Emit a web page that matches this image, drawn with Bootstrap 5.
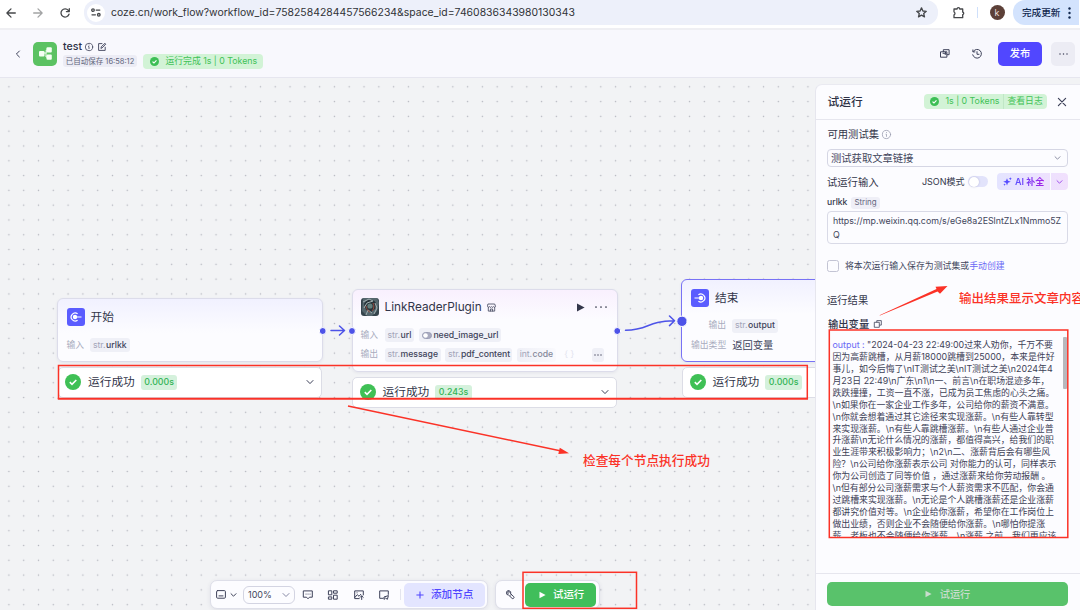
<!DOCTYPE html>
<html lang="zh-CN">
<head>
<meta charset="utf-8">
<meta name="viewport" content="width=device-width, initial-scale=1">
<title>test - Coze</title>
<link href="https://cdn.jsdelivr.net/npm/bootstrap@5.3.0/dist/css/bootstrap.min.css" rel="stylesheet">
<style>
  body { font-family: Inter, "Noto Sans CJK SC", sans-serif; font-size: 9px; line-height: 1; color: #42465c; height: 610px; width: 1080px; overflow: hidden; background: #f2f3f5; }
  svg { display: block; flex: none; overflow: visible; }
  .ico { fill: none; stroke: #3d4159; stroke-width: 1; stroke-linecap: round; stroke-linejoin: round; }
  .nowrap { white-space: nowrap; }

  /* browser bar */
  .browser { height: 30px; background: #fff; border-bottom: 2px solid #efeff3; padding-bottom: 3px; }
  .browser .ico { stroke: #45474a; stroke-width: 1.3; }
  .omnibox { width: 854px; height: 25px; margin-left: 14px; background: #edf0fa; border-radius: 12px; padding: 0 11px 0 3px; }
  .site-dot { width: 18px; height: 18px; border-radius: 50%; background: #fff; }
  .url { font-size: 10.4px; letter-spacing: .02px; color: #303236; margin-left: 6px; padding-top: 2px; }
  .avatar { width: 15px; height: 15px; border-radius: 50%; background: #5c4038; color: #eadfdb; font-size: 9px; }
  .update { width: 66px; height: 25px; background: #d3e3fd; border-radius: 12px 0 0 12px; color: #12294f; font-size: 9.6px; font-weight: 500; padding-left: 9px; }

  /* app header */
  .apphead { height: 48px; background: #f8f8fd; border-bottom: 1px solid #e6e6ef; padding-left: 14px; padding-right: 5px; }
  .flow-logo { width: 24px; height: 24px; border-radius: 5px; background: #5bc262; margin-left: 11px; }
  .saved { height: 12px; width: 74px; border-radius: 3px; background: #ececf5; font-size: 7.5px; color: #61657c; }
  .done { height: 15px; border-radius: 4px; background: #d2f3d6; color: #41c257; font-size: 8.8px; }
  .btn-pub { width: 44px; height: 24px; padding: 0; border-radius: 5px; background: #5147ff; color: #fff; font-size: 10.2px; font-weight: 500; line-height: 1; border: 0; }
  .btn-more { width: 24px; height: 24px; border-radius: 5px; background: #ececf4; }

  /* canvas */
  .stage { background-color: #f2f3f5; background-image: radial-gradient(circle, #b4b6be .7px, transparent 1.05px); background-size: 14.8px 14.8px; background-position: 1.5px 1.4px; }
  .node { position: absolute; width: 266px; border: 1px solid #dcdcea; border-radius: 6px; background: linear-gradient(#f1f1ff, #fcfcff 34px); box-shadow: 0 1px 3px rgba(60,60,110,.08); }
  .node.pink { background: linear-gradient(#f9f0fe, #fcfcff 30px); }
  .node.picked { border-color: #7872f5; }
  .node-ico { width: 18px; height: 18px; border-radius: 3px; background: #5a5cff; }
  .node-title { font-size: 11.7px; color: #33364a; padding-top: 2px; }
  .io { font-size: 8.8px; color: #a9acbe; height: 14px; }
  .chip { height: 14px; border-radius: 3px; background: #eff0f7; padding: 0 3px; color: #a2a5b9; font-size: 8.7px; letter-spacing: -.1px; }
  .chip b { font-weight: 500; color: #40435a; letter-spacing: -.03px; }
  .status { position: absolute; width: 264.5px; height: 30.5px; border: 1px solid #dcdde6; border-radius: 5px; background: #fff; padding: 0 7px 0 6.5px; }
  .status .lbl { font-size: 11.7px; color: #33364a; margin-left: 7px; padding-top: 2px; }
  .took { height: 15px; border-radius: 3px; background: #d5f1dc; color: #32b455; font-size: 8.8px; font-weight: 500; padding: 0 3.5px; margin-left: 6px; }
  .toolbox { position: absolute; height: 29px; background: #fcfcff; border: 1px solid #dedfe9; border-radius: 7px; box-shadow: 0 1px 4px rgba(60,60,110,.1); }
  .zoombox { width: 52px; height: 18px; border: 1px solid #d3d4e2; border-radius: 6px; font-size: 9px; padding: 0 4px; }
  .btn-add { width: 81px; height: 24px; border-radius: 5px; background: #e3e5ff; color: #5147ff; font-size: 10.6px; font-weight: 500; }
  .btn-go { width: 71px; height: 24px; border-radius: 5px; background: #40be5b; color: #fff; font-size: 10.4px; font-weight: 500; }
  .btn-add span, .btn-go span { padding-top: 1.5px; }

  /* side panel */
  .side { width: 265px; margin-top: 6px; background: #fcfcff; border-top-left-radius: 7px; border-left: 1px solid #e6e6ee; border-top: 1px solid #eaeaf1; }
  .side-head { height: 35px; border-bottom: 1px solid #e6e6ee; padding: 0 14px 1px 11.5px; }
  .side-body { padding: 0 12px 0 11px; }
  .sec { font-size: 10.3px; color: #33364a; }
  .pick { height: 18px; margin-top: 8px; border: 1px solid #d5d6e4; border-radius: 4px; padding: 0 6px 0 3px; font-size: 10.3px; }
  .knob-track { width: 20px; height: 11px; border-radius: 6px; background: #e2e3fb; padding: 0 .5px; }
  .knob { width: 10px; height: 10px; border-radius: 50%; background: #fff; box-shadow: 0 0 2px rgba(60,60,120,.3); }
  .ai { height: 17px; width: 71px; border-radius: 4px; background: linear-gradient(90deg, #e4e4ff, #f1e0fd); font-size: 9px; }
  .ai-txt { background: linear-gradient(90deg, #5b50ff, #a31fe6); -webkit-background-clip: text; color: transparent; font-weight: 600; }
  .ai-more { width: 18px; height: 17px; border-left: 1px solid #fcfcff; }
  .typ { height: 12px; border-radius: 3px; background: #efeff7; padding: 0 3px; font-size: 7.9px; color: #63667d; }
  .entry { height: 33px; border: 1px solid #d9dae7; border-radius: 4px; padding: 1.5px 5px; font-size: 8.84px; line-height: 14.6px; }
  .tick { width: 12px; height: 12px; border: 1px solid #c3c4d4; border-radius: 2.5px; }
  .outbox { height: 207px; margin-right: 0; padding: 8.5px 0 0 5.5px; line-height: 11.93px; font-size: 8.9px; overflow: hidden; color: #3e4257; position: relative; }
  .outbox div { white-space: pre; height: 11.93px; }
  .thumb { position: absolute; right: 1px; top: 6px; width: 4px; height: 52px; background: #b8b8bd; border-radius: 1px; }
  .side-foot { height: 37px; border-top: 1px solid #e6e6ee; padding: 8px 12px 0 11px; }
  .btn-run { height: 24px; border-radius: 5px; background: #59c26b; color: #c8ddcd; font-size: 10.2px; font-weight: 500; }

  /* annotations */
  .marks { position: absolute; left: 0; top: 0; pointer-events: none; }
  .note-a, .note-b { position: absolute; color: #fb3227; font-weight: 500; white-space: nowrap; }
  .note-a { left: 583px; top: 455px; font-size: 12.7px; }
  .note-b { left: 959px; top: 292.5px; font-size: 12.5px; }
</style>
<script src="https://cdn.jsdelivr.net/npm/bootstrap@5.3.0/dist/js/bootstrap.bundle.min.js"></script>
</head>
<body class="position-relative d-flex flex-column">

<div class="browser d-flex align-items-center nowrap">
  <svg class="ico" width="10" height="10" viewBox="0 0 10 10" style="margin-left:6px"><path d="M9.3 5H1M5 .9 .9 5 5 9.1"/></svg>
  <svg class="ico opacity-50" width="10" height="10" viewBox="0 0 10 10" style="margin-left:17px"><path d="M.7 5H9M5 .9 9.1 5 5 9.1"/></svg>
  <svg class="ico" width="10" height="10" viewBox="0 0 10 10" style="margin-left:17px"><path d="M9 6.2A4.1 4.1 0 1 1 8.3 2.4L9.2 3.5M9.3.7v2.9H6.4"/></svg>
  <div class="omnibox d-flex align-items-center flex-shrink-0">
    <div class="site-dot d-flex align-items-center justify-content-center">
      <svg class="ico" width="10" height="9" viewBox="0 0 10 9"><circle cx="2" cy="2.1" r="1.3"/><path d="M5.2 2.1h3.6M1 6.8h3.4"/><circle cx="7.8" cy="6.8" r="1.3"/></svg>
    </div>
    <span class="url">coze.cn/work_flow?workflow_id=7582584284457566234&amp;space_id=7460836343980130343</span>
    <svg class="ico ms-auto" width="11" height="11" viewBox="0 0 11 11"><path d="M5.5.8 6.9 4l3.4.3-2.6 2.2.8 3.4-3-1.8-3 1.8.8-3.4L.7 4.3 4.1 4z"/></svg>
  </div>
  <svg class="ico" width="12" height="12" viewBox="0 0 12 12" style="margin-left:14.5px"><path d="M1 2h3.1a1.3 1.3 0 0 1 2.6 0h3v3a1.4 1.4 0 0 1 0 2.7v3H1V7.8a1.5 1.5 0 0 0 0-2.8z"/></svg>
  <div style="width:1px;height:11px;background:#cfe0fb;margin-left:12px"></div>
  <div class="avatar d-flex align-items-center justify-content-center flex-shrink-0" style="margin-left:12px">k</div>
  <div class="update d-flex align-items-center flex-shrink-0" style="margin-left:8.5px">完成更新
    <svg width="3" height="12" viewBox="0 0 3 12" style="margin-left:8px" fill="#12294f"><circle cx="1.5" cy="1.5" r="1.2"/><circle cx="1.5" cy="6" r="1.2"/><circle cx="1.5" cy="10.5" r="1.2"/></svg>
  </div>
</div>

<header class="apphead d-flex align-items-center nowrap">
  <svg class="ico" width="8" height="8" viewBox="0 0 8 8"><path d="M5.4 1 2.4 4l3 3"/></svg>
  <div class="flow-logo d-flex align-items-center justify-content-center">
    <svg width="13" height="13" viewBox="0 0 13 13" fill="#f3fff3"><rect x="0" y="4" width="5.5" height="5.5" rx="1"/><rect x="7.5" y=".2" width="5.3" height="5.3" rx="1"/><rect x="7.5" y="7.5" width="5.3" height="5.3" rx="1"/><path d="M5 6h2.2V3h1M7 6v4h1" fill="none" stroke="#f3fff3"/></svg>
  </div>
  <div class="d-flex flex-column" style="margin-left:6px">
    <div class="d-flex align-items-center" style="height:14px;margin-top:1px">
      <span style="font-size:10.6px;font-weight:500;color:#2e3145;padding-top:1px">test</span>
      <svg class="ico" width="8" height="8" viewBox="0 0 8 8" style="margin-left:3px;stroke-width:.8"><circle cx="4" cy="4" r="3.7"/><path d="M3.5 3.6H4v2.1M4 2v.1"/></svg>
      <svg class="ico" width="8" height="8" viewBox="0 0 8 8" style="margin-left:5px;stroke-width:.9"><path d="M4 .6H.6v6.8h6.6V4.2M3 5l.3-1.3L7 .3l.8.8L4.3 4.7z"/></svg>
    </div>
    <div class="d-flex align-items-center" style="height:15px">
      <span class="saved d-flex align-items-center justify-content-center" style="padding-top:1px">已自动保存 16:58:12</span>
      <span class="done d-flex align-items-center" style="width:120px;margin-left:6px;padding-left:6.5px">
        <svg width="9" height="9" viewBox="0 0 10 10"><circle cx="5" cy="5" r="5" fill="#3cbf55"/><path d="M2.8 5.1 4.4 6.7 7.2 3.7" fill="none" stroke="#fff" stroke-width="1.3"/></svg>
        <span style="margin-left:7px">运行完成 1s | 0 Tokens</span>
      </span>
    </div>
  </div>
  <div class="ms-auto d-flex align-items-center">
    <svg class="ico" width="10" height="9" viewBox="0 0 10 9"><path d="M3.3 2.7V.7h5.8v5H7M.9 2.8h6v5.4h-6zM5.9 4.3H3M5.2 3 6 4.3 5.2 5.6" /></svg>
    <svg class="ico" width="10" height="10" viewBox="0 0 10 10" style="margin-left:22.5px"><path d="M1.2 2.5A4.4 4.4 0 1 1 .7 5.8M.9.9v2h2M5 2.7v2.6h2"/></svg>
    <button class="btn btn-pub" style="margin-left:16px">发布</button>
    <div class="btn-more d-flex align-items-center justify-content-center" style="margin-left:9px"><svg width="9" height="2" viewBox="0 0 9 2" fill="#41445a"><circle cx="1" cy="1" r=".75"/><circle cx="4.5" cy="1" r=".75"/><circle cx="8" cy="1" r=".75"/></svg></div>
  </div>
</header>

<main class="d-flex flex-grow-1">
  <section class="stage flex-grow-1 position-relative overflow-hidden nowrap">

    <article class="node" style="left:57px;top:220px;height:64px;padding:9px 8.5px">
      <div class="d-flex align-items-center">
        <div class="node-ico d-flex align-items-center justify-content-center"><svg width="12" height="10" viewBox="0 0 12 10" fill="none" stroke="#fff" stroke-width="1.2"><path d="M7.6 1.8A4 4 0 1 0 7.6 8.2M5 5h6.5"/><circle cx="5" cy="5" r="1.6" fill="#fff"/></svg></div>
        <span class="node-title" style="margin-left:6px">开始</span>
      </div>
      <div class="io d-flex align-items-center" style="margin-top:12px">输入<span class="chip d-flex align-items-center" style="margin-left:6px">str.&#8202;<b>urlkk</b></span></div>
    </article>

    <article class="node pink" style="left:351.5px;top:211px;height:83px;padding:8px 8px">
      <div class="d-flex align-items-center">
        <svg width="18" height="18" viewBox="0 0 18 18"><rect width="18" height="18" rx="3" fill="#35444c"/><path d="M2 0h14l2 5-2 8-5 5H6L1 13z" fill="#55666d"/><path d="M3 6c2-5 9-6 12-1l-1 6-4 3-5-2z" fill="#28343a"/><path d="M2 4 8 1l4 2-6 2-3 5M14 5l2 5-3 6M5 17l2-5 4 3" stroke="#a0afb0" fill="none"/><circle cx="9" cy="8" r="2.6" fill="#637f7d"/><path d="M5 8c1 4 2 5 4 6M12 5c2 4 0 7-1 8" stroke="#9d4c40" fill="none"/></svg>
        <span class="node-title" style="margin-left:6px;font-size:11.8px">LinkReaderPlugin</span>
        <svg class="ico" width="9" height="9" viewBox="0 0 9 9" style="margin-left:5px;stroke-width:.8"><path d="M1.3 1h6.4l.8 2.3c0 1-1.3 1.3-2 .3-.5 1-1.5 1-2 0-.5 1-1.6 1-2 0-.8 1-2 .7-2-.3zM1.3 4.5v3.6h6.4V4.5M3.4 8V6h2.2v2"/></svg>
        <svg class="ms-auto" width="9" height="9" viewBox="0 0 9 9"><path d="M1 .4v8.2L8.6 4.5z" fill="#33364a"/></svg>
        <svg width="12" height="2" viewBox="0 0 12 2" fill="#33364a" style="margin-left:10px;margin-right:2px"><circle cx="1" cy="1" r=".85"/><circle cx="6" cy="1" r=".85"/><circle cx="11" cy="1" r=".85"/></svg>
      </div>
      <div class="io d-flex align-items-center" style="margin-top:12px">输入<span class="chip d-flex align-items-center" style="margin-left:6.5px">str.&#8202;<b>url</b></span>
        <span class="chip d-flex align-items-center" style="margin-left:4.5px"><svg width="10" height="7" viewBox="0 0 10 7" style="margin-right:1.5px"><rect x=".5" y=".5" width="9" height="6" rx="3" fill="#a9abc0" stroke="#9b9eb6"/><circle cx="3.5" cy="3.5" r="2.3" fill="#fff"/></svg><b>need_image_url</b></span></div>
      <div class="io d-flex align-items-center" style="margin-top:5.5px">输出<span class="chip d-flex align-items-center" style="margin-left:6.5px">str.&#8202;<b>message</b></span>
        <span class="chip d-flex align-items-center" style="margin-left:4px;padding-right:2px">str.&#8202;<b>pdf_content</b></span>
        <span class="chip d-flex align-items-center" style="margin-left:4.5px;background:linear-gradient(90deg,#eff0f7,#f9f9fd)">int.&#8202;<b style="color:#85889a">code</b></span>
        <span style="margin-left:8px;color:#e2e3ee">{ }</span>
        <span class="chip d-flex align-items-center ms-auto" style="margin-right:5px;width:12px;padding:0 2px"><svg width="8" height="2" viewBox="0 0 8 2" fill="#41445a"><circle cx="1" cy="1" r=".7"/><circle cx="4" cy="1" r=".7"/><circle cx="7" cy="1" r=".7"/></svg></span></div>
    </article>

    <article class="node picked" style="left:681px;top:201px;height:83px;padding:8.5px 9px">
      <div class="d-flex align-items-center">
        <div class="node-ico d-flex align-items-center justify-content-center"><svg width="12" height="10" viewBox="0 0 12 10" fill="none" stroke="#fff" stroke-width="1.2"><path d="M4.4 1.8A4 4 0 1 1 4.4 8.2M.5 5H7"/><circle cx="7" cy="5" r="1.6" fill="#fff"/></svg></div>
        <span class="node-title" style="margin-left:6px">结束</span>
      </div>
      <div class="io d-flex align-items-center" style="margin-top:12px;padding-left:17.5px">输出<span class="chip d-flex align-items-center" style="margin-left:6px">str.&#8202;<b>output</b></span></div>
      <div class="io d-flex align-items-center" style="margin-top:5.5px">输出类型<span style="margin-left:6px;font-size:10.3px;color:#42465c;padding-top:1px">返回变量</span></div>
    </article>

    <div class="status d-flex align-items-center" style="left:57.5px;top:289px">
      <svg width="16" height="16" viewBox="0 0 16 16"><circle cx="8" cy="8" r="8" fill="#3fc055"/><path d="M4.8 8.2 7 10.3 11.3 6" fill="none" stroke="#fff" stroke-width="1.6"/></svg>
      <span class="lbl">运行成功</span><span class="took d-flex align-items-center">0.000s</span>
      <svg class="ico ms-auto" width="8" height="8" viewBox="0 0 8 8"><path d="M1 2.5 4 5.6l3-3.1"/></svg>
    </div>
    <div class="status d-flex align-items-center" style="left:352px;top:299px">
      <svg width="16" height="16" viewBox="0 0 16 16"><circle cx="8" cy="8" r="8" fill="#3fc055"/><path d="M4.8 8.2 7 10.3 11.3 6" fill="none" stroke="#fff" stroke-width="1.6"/></svg>
      <span class="lbl">运行成功</span><span class="took d-flex align-items-center">0.243s</span>
      <svg class="ico ms-auto" width="8" height="8" viewBox="0 0 8 8"><path d="M1 2.5 4 5.6l3-3.1"/></svg>
    </div>
    <div class="status d-flex align-items-center" style="left:682px;top:289px">
      <svg width="16" height="16" viewBox="0 0 16 16"><circle cx="8" cy="8" r="8" fill="#3fc055"/><path d="M4.8 8.2 7 10.3 11.3 6" fill="none" stroke="#fff" stroke-width="1.6"/></svg>
      <span class="lbl">运行成功</span><span class="took d-flex align-items-center">0.000s</span>
    </div>

    <svg class="position-absolute top-0 start-0" width="815" height="532" viewBox="0 78 815 532" fill="none" stroke="#4d53e8" stroke-width="1.5" stroke-linecap="round" stroke-linejoin="round">
      <path d="M331 330.5h13.5M339.5 326l5 4.5-5 4.5M625.5 330.3C650 330 646 321 674 320.8M669.5 316l5 4.8-5 4.8"/>
      <g fill="#4d53e8" stroke="#fff" stroke-width="1"><circle cx="322.8" cy="331" r="3.5"/><circle cx="352" cy="331" r="3.5"/><circle cx="617.3" cy="331" r="3.5"/><circle cx="682" cy="321.3" r="5.2"/></g>
    </svg>

    <div class="toolbox d-flex align-items-center" style="left:210px;top:502px;width:278px;padding:0 2px 0 5px">
      <svg class="ico" width="10" height="9" viewBox="0 0 10 9"><rect x=".6" y=".6" width="8.8" height="7.6" rx="1"/><path d="M3 5.9h4"/></svg>
      <svg class="ico" width="7" height="6" viewBox="0 0 7 6" style="margin-left:4px"><path d="M1 1.7 3.5 4.2 6 1.7"/></svg>
      <div class="zoombox d-flex align-items-center" style="margin-left:6px">100%<svg class="ico ms-auto" width="8" height="6" viewBox="0 0 8 6" style="stroke:#8688a5"><path d="M1 1.5 4 4.5l3-3"/></svg></div>
      <svg class="ico" width="10" height="10" viewBox="0 0 10 10" style="margin-left:8px"><path d="M.7.9h8.6v6.3H6.5L5 8.8 3.5 7.2H.7zM3 4.1h.1M5 4.1h.1M7 4.1h.1"/></svg>
      <svg class="ico" width="10" height="10" viewBox="0 0 10 10" style="margin-left:15px"><path d="M.8.8h3v4h-3zM5.9.8h3.3v2.4H5.9zM.8 6.9h3v2.3h-3zM5.9 5.2h3.3v4H5.9z"/></svg>
      <svg class="ico" width="10" height="10" viewBox="0 0 10 10" style="margin-left:15.5px"><path d="M5.2 8.6H.7V.9h8.6v4M.9 7.4 3.3 4.7 5 6.3 6.8 4.3M3 2.8h.1M7.7 9.5V6M6.2 7.3 7.7 5.8l1.5 1.5"/></svg>
      <svg class="ico" width="10" height="10" viewBox="0 0 10 10" style="margin-left:15px"><path d="M4 8.3H.7V.9h8.6v3.5M5 9V7l4.4-1.4-1 3.7-1.5-1z"/></svg>
      <div style="width:1px;height:11px;background:#e4e5ee;margin-left:11px"></div>
      <div class="btn-add d-flex align-items-center ms-auto" style="padding-left:12px">
        <svg width="8" height="8" viewBox="0 0 8 8" stroke="#5147ff" stroke-width="1.1"><path d="M4 .4v7.2M.4 4h7.2"/></svg><span style="margin-left:7px">添加节点</span>
      </div>
    </div>
    <div class="toolbox d-flex align-items-center" style="left:494.5px;top:502px;width:105px;padding:0 2.5px 0 10px">
      <svg class="ico" width="9" height="9" viewBox="0 0 9 9"><path d="M4.8 3.5A2.2 2.2 0 1 0 2.6 5.1l3.3 3.1a1 1 0 0 0 1.8-1.6L4.6 3.9M2.4.8l1 1.5-1.3 1L.8 2.4M4.5 5.3l1-1"/></svg>
      <div class="btn-go d-flex align-items-center ms-auto" style="padding-left:13.5px">
        <svg width="7" height="8" viewBox="0 0 7 8"><path d="M.5.8v6.4L6.6 4z" fill="#fff"/></svg><span style="margin-left:7.5px">试运行</span>
      </div>
    </div>
  </section>

  <aside class="side d-flex flex-column flex-shrink-0 nowrap">
    <div class="side-head d-flex align-items-center">
      <span style="font-size:11.7px;font-weight:500;color:#2e3145;padding-top:2px">试运行</span>
      <span class="done d-flex align-items-center ms-auto" style="width:123px;padding-left:6px">
        <svg width="9" height="9" viewBox="0 0 10 10"><circle cx="5" cy="5" r="5" fill="#3cbf55"/><path d="M2.8 5.1 4.4 6.7 7.2 3.7" fill="none" stroke="#fff" stroke-width="1.3"/></svg>
        <span style="margin-left:6.5px">1s | 0 Tokens</span><span class="d-flex align-items-center" style="height:15px;border-left:1px solid #c0e7c6;margin-left:3.5px;padding-left:3.5px">查看日志</span>
      </span>
      <svg class="ico" width="8" height="8" viewBox="0 0 8 8" style="margin-left:11px;stroke-width:1.2"><path d="M.4.4l7.2 7.2M7.6.4.4 7.6"/></svg>
    </div>
    <div class="side-body flex-grow-1">
      <div class="sec d-flex align-items-center" style="padding-top:8px;height:21px;padding-left:.5px">可用测试集<svg class="ico" width="9" height="9" viewBox="0 0 9 9" style="margin-left:3.5px;stroke:#9a9db0;stroke-width:.8"><circle cx="4.5" cy="4.5" r="4.1"/><path d="M4 4.2h.5v2.2M4.5 2.4v.1"/></svg></div>
      <div class="pick d-flex align-items-center">测试获取文章链接<svg class="ico ms-auto" width="7" height="6" viewBox="0 0 7 6" style="stroke:#8d90a5"><path d="M1 1.7 3.5 4.2 6 1.7"/></svg></div>
      <div class="d-flex align-items-center" style="height:17px;margin-top:6px">
        <span class="sec" style="padding-top:1px">试运行输入</span><span class="ms-auto" style="color:#33364a">JSON模式</span>
        <span class="knob-track d-flex align-items-center" style="margin-left:3.5px"><span class="knob"></span></span>
        <span class="ai d-flex align-items-center" style="margin-left:9px;padding-left:6px">
          <svg width="9" height="9" viewBox="0 0 9 9" fill="#554cff"><path d="M4 1.2 5 3.7 7.8 4.7 5 5.8 4 8.4 3 5.8.2 4.7 3 3.7zM7.3.2l.5 1.1 1 .4-1 .5-.5 1-.4-1-1.1-.5 1.1-.4zM1.5 6.4l.4.9.9.3-.9.4-.4.9-.3-.9-.9-.4.9-.3z"/></svg>
          <span class="ai-txt" style="margin-left:3px">AI 补全</span>
          <span class="ai-more d-flex align-items-center justify-content-center ms-auto"><svg class="ico" width="7" height="6" viewBox="0 0 7 6" style="stroke:#a052ed"><path d="M1 1.7 3.5 4.2 6 1.7"/></svg></span>
        </span>
      </div>
      <div class="d-flex align-items-center" style="height:12px;margin-top:6.5px"><span style="font-weight:500;color:#33364a;font-size:8.6px">urlkk</span><span class="typ d-flex align-items-center" style="margin-left:4px">String</span></div>
      <div class="entry" style="margin-top:2.5px">https://mp.weixin.qq.com/s/eGe8a2ESlntZLx1Nmmo5Z<br>Q</div>
      <div class="d-flex align-items-center" style="height:14px;margin-top:15px;font-size:8.9px"><span class="tick"></span><span style="margin-left:6px">将本次运行输入保存为测试集或<span style="color:#6a68f5">手动创建</span></span></div>
      <div class="sec" style="margin-top:22px">运行结果</div>
      <div class="sec d-flex align-items-center" style="margin-top:13.5px;font-weight:500;padding-left:1px">输出变量<svg class="ico" width="8" height="8" viewBox="0 0 8 8" style="margin-left:5px;stroke-width:.8"><path d="M2.8 2V.6h4.5v4.5H5.8M.7 2.3h4.6v5H.7z"/></svg></div>
      <div class="outbox" style="margin-top:1.5px">
<div><span style="color:#6a68f5">output : </span>"2024-04-23 22:49:00过来人劝你，千万不要</div>
<div>因为高薪跳槽，从月薪18000跳槽到25000，本来是件好</div>
<div>事儿，如今后悔了\nIT测试之美\nIT测试之美\n2024年4</div>
<div>月23日 22:49\n广东\n1\n一、前言\n在职场混迹多年，</div>
<div>跌跌撞撞，工资一直不涨，已成为员工焦虑的心头之痛。</div>
<div>\n如果你在一家企业工作多年，公司给你的薪资不满意。</div>
<div>\n你就会想着通过其它途径来实现涨薪。\n有些人靠转型</div>
<div>来实现涨薪。\n有些人靠跳槽涨薪。\n有些人通过企业普</div>
<div>升涨薪\n无论什么情况的涨薪，都值得高兴，给我们的职</div>
<div>业生涯带来积极影响力；\n2\n二、涨薪背后会有哪些风</div>
<div>险？\n公司给你涨薪表示公司 对你能力的认可，同样表示</div>
<div>你为公司创造了同等价值 ，通过涨薪来给你劳动报酬 。</div>
<div>\n但有部分公司涨薪需求与个人薪资需求不匹配，你会通</div>
<div>过跳槽来实现涨薪。\n无论是个人跳槽涨薪还是企业涨薪</div>
<div>都讲究价值对等。\n企业给你涨薪，希望你在工作岗位上</div>
<div>做出业绩，否则企业不会随便给你涨薪。\n哪怕你提涨</div>
<div>薪，老板也不会随便给你涨薪，\n涨薪 之前，我们更应该</div>
        <span class="thumb"></span>
      </div>
    </div>
    <div class="side-foot">
      <div class="btn-run d-flex align-items-center justify-content-center"><svg width="7" height="8" viewBox="0 0 7 8"><path d="M.5.8v6.4L6.6 4z" fill="#c8ddcd"/></svg><span style="margin-left:8px">试运行</span></div>
    </div>
  </aside>
</main>

<svg class="marks" width="1080" height="610" viewBox="0 0 1080 610" fill="none" stroke="#fb3227" stroke-width="1.5">
  <path d="M58.5 399V365.5H807.3V398.7"/><path d="M57.8 398.7H808" stroke-width="2"/>
  <rect x="523" y="572.3" width="113.5" height="36"/>
  <rect x="829.3" y="330" width="238.5" height="207.5"/>
  <path d="M348 406 560 450.7"/>
  <g fill="#fb3227" stroke="none"><path d="M569 453.3 559.8 447.8 558.3 453.9zM879.5 315.3 936.5 289 935.5 286.8 947.5 286 940 293.8 937.5 291.4 880 315.6z"/></g>
</svg>
<div class="note-a">检查每个节点执行成功</div>
<div class="note-b">输出结果显示文章内容</div>
</body>
</html>
